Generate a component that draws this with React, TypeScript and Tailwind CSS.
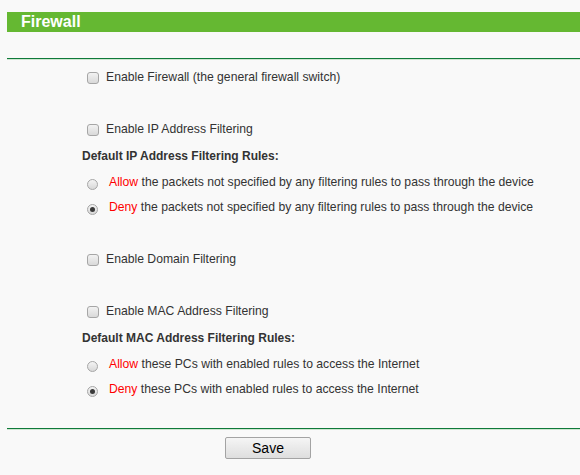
import React from "react";

const Checkbox = () => (
	<span className="inline-block w-[12px] h-[12px] rounded-[3px] border border-[#a6a6a6] bg-gradient-to-b from-[#f2f2f2] to-[#d9d9d9] shrink-0" />
);

const Radio = ({ checked }: { checked?: boolean }) => (
	<span className="w-[11px] h-[11px] rounded-full border border-[#a6a6a6] bg-gradient-to-b from-[#f4f4f4] to-[#d8d8d8] shrink-0 flex items-center justify-center">
		{checked && <span className="w-[5px] h-[5px] rounded-full bg-[#3a3a3a]" />}
	</span>
);

const CheckRow = ({ label, className }: { label: string; className: string }) => (
	<div className={`h-[20px] flex items-center pl-[80px] pt-[2px] ${className}`}>
		<span className="mt-[2px] flex">
			<Checkbox />
		</span>
		<span className="ml-[7px]">{label}</span>
	</div>
);

const RadioRow = ({
	word,
	rest,
	checked,
	className,
}: {
	word: string
	rest: string
	checked?: boolean
	className: string
}) => (
	<div className={`h-[20px] flex items-center pl-[80px] ${className}`}>
		<span className="mt-[4px]">
			<Radio checked={checked} />
		</span>
		<span className="ml-[11px]">
			<span className="text-[#f00]">{word}</span> {rest}
		</span>
	</div>
);

export default function App() {
	return (
		<div className="w-[580px] h-[475px] bg-[#f9f9f9] pt-[12px] pl-[7px] text-[12.2px] text-[#333] font-['Liberation_Sans',Arial,sans-serif] overflow-hidden">
			<div className="h-[20px] bg-[#65b832] pl-[14px] text-white font-bold text-[16px] leading-[20px]">
				Firewall
			</div>
			<div className="mt-[26px] h-[1px] bg-[#0f7a3a]" />
			<div className="h-[1px] bg-[#cfe6d2]" />

			<CheckRow className="mt-[6px]" label="Enable Firewall (the general firewall switch)" />
			<CheckRow className="mt-[32px]" label="Enable IP Address Filtering" />
			<div className="mt-[8px] h-[20px] flex items-center pl-[75px] font-bold text-[12px]">
				Default IP Address Filtering Rules:
			</div>
			<RadioRow
				className="mt-[6px]"
				word="Allow"
				rest="the packets not specified by any filtering rules to pass through the device"
			/>
			<RadioRow
				className="mt-[5px]"
				checked
				word="Deny"
				rest="the packets not specified by any filtering rules to pass through the device"
			/>
			<CheckRow className="mt-[31px]" label="Enable Domain Filtering" />
			<CheckRow className="mt-[32px]" label="Enable MAC Address Filtering" />
			<div className="mt-[8px] h-[20px] flex items-center pl-[75px] font-bold text-[12px]">
				Default MAC Address Filtering Rules:
			</div>
			<RadioRow
				className="mt-[6px]"
				word="Allow"
				rest="these PCs with enabled rules to access the Internet"
			/>
			<RadioRow
				className="mt-[5px]"
				checked
				word="Deny"
				rest="these PCs with enabled rules to access the Internet"
			/>

			<div className="mt-[29px] h-[1px] bg-[#0f7a3a]" />
			<div className="h-[1px] bg-[#cfe6d2]" />
			<div className="flex pl-[218px] mt-[7px]">
				<button className="w-[86px] h-[22px] border border-[#a3a3a3] rounded-[2px] bg-gradient-to-b from-[#f5f5f5] to-[#dedede] text-[14px] text-black leading-none">
					Save
				</button>
			</div>
		</div>
	)
}
